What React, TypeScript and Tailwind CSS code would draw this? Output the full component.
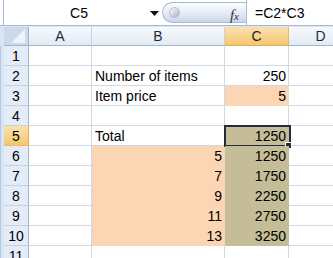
import React from "react";

type Row = {
  n: number;
  b?: string;
  bRight?: boolean;
  bFill?: string;
  c?: string;
  cFill?: string;
  active?: boolean;
};

const PEACH = "bg-[#fcd5b4] border-[#fcd5b4]";
const KHAKI = "bg-[#c4bd97] border-[#c4bd97]";

const rows: Row[] = [
  { n: 1 },
  { n: 2, b: "Number of items", c: "250" },
  { n: 3, b: "Item price", c: "5", cFill: PEACH },
  { n: 4 },
  { n: 5, b: "Total", c: "1250", cFill: KHAKI, active: true },
  { n: 6, b: "5", bRight: true, bFill: PEACH, c: "1250", cFill: KHAKI },
  { n: 7, b: "7", bRight: true, bFill: PEACH, c: "1750", cFill: KHAKI },
  { n: 8, b: "9", bRight: true, bFill: PEACH, c: "2250", cFill: KHAKI },
  { n: 9, b: "11", bRight: true, bFill: PEACH, c: "2750", cFill: KHAKI },
  { n: 10, b: "13", bRight: true, bFill: PEACH, c: "3250", cFill: KHAKI },
  { n: 11 },
];

const cols = [
  { key: "A", w: "w-[63px]" },
  { key: "B", w: "w-[133px]" },
  { key: "C", w: "w-[64px]" },
  { key: "D", w: "w-[64px]" },
];

const FormulaBar = () => (
  <div className="flex h-[26px] pl-[3px] border-b border-[#a7bad3] bg-white">
    {/* Name box */}
    <div className="relative w-[159px] flex items-center border-l border-[#a7bad3]">
      <span className="flex-1 text-center text-[14px] pr-[8px] pt-[1px]">C5</span>
      <svg width="9" height="5" viewBox="0 0 9 5" className="absolute left-[146px] top-[11px]">
        <polygon points="0,0 9,0 4.5,5" fill="#111" />
      </svg>
    </div>
    {/* Pill with handle and fx */}
    <div className="mt-[2px] h-[21px] w-[84px] rounded-l-full border border-r-0 border-[#a9b9cf] bg-gradient-to-b from-[#fbfcfe] via-[#e6edf6] to-[#c9d6e8] relative">
      <div className="absolute left-[6px] top-[4px] w-[11px] h-[11px] rounded-full bg-gradient-to-br from-[#ffffff] to-[#a9b2be] border border-[#b6bfca]" />
      <span
        className="absolute right-[7px] top-[1px] text-[15px] italic text-[#333]"
        style={{ fontFamily: '"Liberation Serif", serif' }}
      >
        f<span className="text-[11px]">x</span>
      </span>
    </div>
    <div className="flex-1 flex items-center border-l border-[#a9b9cf] pl-[8px] pt-[1px] text-[14px]">
      =C2*C3
    </div>
  </div>
);

export default function App() {
  return (
    <div
      className="w-[333px] h-[258px] overflow-hidden bg-[#dbe5f1] text-black"
      style={{ fontFamily: '"Liberation Sans", Arial, sans-serif' }}
    >
      <FormulaBar />
      <div className="h-[1px]" />
      {/* Column headers */}
      <div className="flex h-[19px] w-[400px]">
        <div className="w-[4px] shrink-0" />
        <div className="relative w-[25px] shrink-0 bg-[#cbd9eb] border-r border-b border-[#9eb6ce]">
          <svg width="14" height="14" viewBox="0 0 14 14" className="absolute right-[3px] bottom-[2px]">
            <polygon points="14,0 14,14 0,14" fill="#eef3f9" />
          </svg>
        </div>
        {cols.map((col) => (
          <div
            key={col.key}
            className={`${col.w} shrink-0 flex items-center justify-center text-[14px] border-r border-b ${
              col.key === "C"
                ? "bg-gradient-to-b from-[#fbe1ae] to-[#f3c66e] border-r-[#f0b85a] border-b-[#e6ac4d] text-[#1f1f1f]"
                : "bg-gradient-to-b from-[#f7f9fc] to-[#e2eaf4] border-r-[#c6d3e3] border-b-[#9eb6ce] text-[#1f2b3a]"
            }`}
          >
            {col.key}
          </div>
        ))}
      </div>
      {/* Rows */}
      {rows.map((r) => (
        <div key={r.n} className="flex h-[20px] w-[400px]">
          <div className="w-[4px] shrink-0 border-l border-[#b3c8e4]" />
          <div
            className={`w-[25px] shrink-0 flex items-center justify-center pt-[2px] text-[14px] border-r border-b ${
              r.active
                ? "bg-gradient-to-b from-[#fbe1ae] to-[#f3c66e] border-r-[#e6ac4d] border-b-[#f0b85a]"
                : "bg-[#e4ecf7] border-r-[#9eb6ce] border-b-[#c5d2e3]"
            }`}
          >
            {r.n}
          </div>
          <div className="w-[63px] shrink-0 bg-white border-r border-b border-[#d0d7e5]" />
          <div
            className={`w-[133px] shrink-0 flex items-center pt-[2px] border-r border-b text-[14px] ${
              r.bFill ?? "bg-white border-[#d0d7e5]"
            } ${r.bRight ? "justify-end pr-[2px]" : "pl-[3px]"}`}
          >
            {r.b}
          </div>
          <div
            className={`relative w-[64px] shrink-0 flex items-center justify-end pr-[2px] pt-[2px] border-r border-b text-[14px] ${
              r.cFill ?? "bg-white border-[#d0d7e5]"
            }`}
          >
            {r.c}
            {r.active && (
              <>
                <div className="absolute left-[-1px] top-[-1px] w-[67px] h-[22px] border-2 border-[#262b3b]" />
                <div className="absolute right-[-4px] bottom-[-4px] w-[7px] h-[7px] bg-[#262b3b] border border-white" />
              </>
            )}
          </div>
          <div className="w-[64px] shrink-0 bg-white border-r border-b border-[#d0d7e5]" />
        </div>
      ))}
    </div>
  );
}
